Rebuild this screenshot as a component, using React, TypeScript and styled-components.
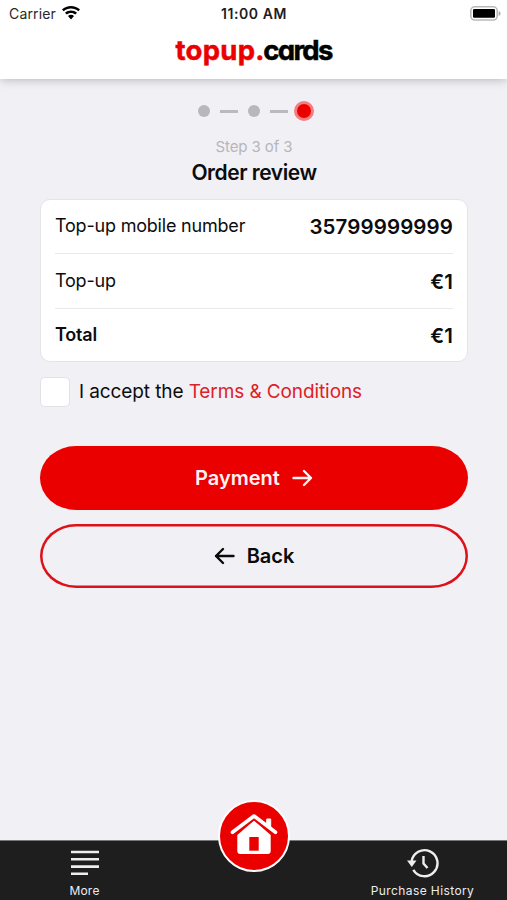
import React from "react";
import styled, { createGlobalStyle } from "styled-components";

const red = "#eb0000";

const GlobalStyle = createGlobalStyle`
  * { box-sizing: border-box; }
  body { margin: 0; background: #f1f0f5; }
  button { font: inherit; }
`;

const Screen = styled.div`
  width: 507px;
  height: 900px;
  display: flex;
  flex-direction: column;
  overflow: hidden;
  background: #f1f0f5;
  color: #0c0c0e;
  font-family: Inter, "Liberation Sans", sans-serif;
`;

const Header = styled.header`
  height: 79px;
  background: #fff;
  box-shadow: 0 1px 9px rgba(0, 0, 0, 0.24);
`;

const StatusBar = styled.div`
  height: 28px;
  padding: 0 6px 0 9px;
  display: grid;
  grid-template-columns: 1fr auto 1fr;
  align-items: center;
  font-size: 14px;
  line-height: 28px;
`;

const Carrier = styled.div`
  display: flex;
  align-items: center;
  gap: 6px;
  letter-spacing: 0.15px;
  color: #28282a;

  svg {
    margin-bottom: 2px;
  }
`;

const Clock = styled.div`
  font-weight: 600;
  font-size: 14px;
  letter-spacing: 0.55px;
  margin-right: 2px;
  color: #1c1c1e;
`;

const BatterySlot = styled.div`
  display: flex;
  justify-content: flex-end;
  padding-bottom: 2px;
`;

const Brand = styled.div`
  display: flex;
  justify-content: center;
  font-size: 27.5px;
  line-height: 44px;
  font-weight: 700;
  letter-spacing: -1.7px;
  color: #000;
  font-feature-settings: "cv11" 1;
  -webkit-text-stroke: 0.5px currentColor;
`;

const BrandRed = styled.span`
  color: ${red};
  letter-spacing: 0.3px;
`;

const BrandDot = styled.span`
  color: ${red};
  letter-spacing: -1.2px;
`;

const Main = styled.main`
  flex: 1;
  padding: 22px 39px 0 40px;
  display: flex;
  flex-direction: column;
`;

const Steps = styled.div`
  height: 20px;
  padding-left: 3px;
  display: flex;
  justify-content: center;
  align-items: center;
`;

const Dot = styled.span<{ $active?: boolean }>`
  width: ${(p) => (p.$active ? 20 : 12)}px;
  height: ${(p) => (p.$active ? 20 : 12)}px;
  border-radius: 50%;
  background: ${(p) => (p.$active ? red : "#b8b8ba")};
  border: ${(p) => (p.$active ? "3px solid #f47d80" : "0")};
`;

const Dash = styled.span<{ $end: number }>`
  width: 18px;
  height: 3px;
  background: #bababc;
  margin: 0 ${(p) => p.$end}px 0 10px;
`;

const StepLabel = styled.div`
  margin-top: 16px;
  text-align: center;
  font-size: 15px;
  line-height: 20px;
  letter-spacing: -0.1px;
  color: #b6b6ba;
`;

const Title = styled.h1`
  margin: 3px 0 0;
  text-align: center;
  font-size: 21px;
  line-height: 26px;
  font-weight: 600;
  letter-spacing: -0.45px;
`;

const Card = styled.section`
  height: 163px;
  margin-top: 13px;
  padding: 0 14px;
  background: #fff;
  border: 1px solid #e4e4e8;
  border-radius: 10px;
`;

const Row = styled.div<{ $height: number; $strong?: boolean }>`
  height: ${(p) => p.$height}px;
  padding-bottom: 1px;
  display: flex;
  justify-content: space-between;
  align-items: center;
  border-bottom: ${(p) => (p.$strong ? "0" : "1.5px solid #e9e9eb")};
  font-size: 18px;
  font-weight: ${(p) => (p.$strong ? 600 : 400)};
  letter-spacing: -0.2px;
`;

const Value = styled.span`
  padding-top: 2px;
  font-size: 20.5px;
  font-weight: 600;
  letter-spacing: 0.1px;
`;

const Terms = styled.label`
  margin-top: 14px;
  display: flex;
  align-items: center;
  gap: 9px;
  height: 31px;
  font-size: 19px;
  letter-spacing: -0.1px;
  white-space: pre;
`;

const Checkbox = styled.span`
  width: 30px;
  height: 30px;
  background: #fff;
  border: 1px solid #e2e2e6;
  border-radius: 5px;
`;

const TermsLink = styled.span`
  color: #df2027;
`;

const Button = styled.button<{ $outline?: boolean }>`
  flex: none;
  height: 64px;
  margin-top: ${(p) => (p.$outline ? 14 : 39)}px;
  padding: 0;
  display: flex;
  align-items: center;
  justify-content: center;
  gap: 12px;
  border: 0;
  box-shadow: ${(p) => (p.$outline ? "inset 0 0 0 2.5px #dc1218" : "none")};
  border-radius: 36px / 32px;
  background: ${(p) => (p.$outline ? "transparent" : red)};
  color: ${(p) => (p.$outline ? "#0a0a0a" : "#fff2f2")};
  font-size: 20px;
  font-weight: 600;
`;

const TabBar = styled.nav`
  height: 60px;
  display: grid;
  grid-template-columns: 1fr 1fr 1fr;
  background: #1e1e1f;
  border-top: 1px solid #767679;
  color: #ececec;
`;

const Tab = styled.div<{ $spacing?: number }>`
  display: flex;
  flex-direction: column;
  align-items: center;
  padding-top: 7px;
  font-size: 12px;
  line-height: 16px;
  letter-spacing: ${(p) => p.$spacing ?? 0.2}px;
  white-space: nowrap;
`;

const TabIcon = styled.svg`
  display: block;
  margin-bottom: 5px;
`;

const HomeButton = styled.div`
  justify-self: center;
  width: 72px;
  height: 72px;
  margin-top: -41px;
  display: flex;
  justify-content: center;
  align-items: center;
  border-radius: 50%;
  border: 2px solid #fff;
  background: ${red};
`;

const Arrow = ({ back }: { back?: boolean }) => (
  <svg width="21" height="18" viewBox="0 0 21 18" fill="none" stroke="currentColor" strokeWidth="2.4" strokeLinecap="round" strokeLinejoin="round">
    {back ? <path d="M19.5 9H2M9 2 2 9l7 7" /> : <path d="M1.5 9H19M12 2l7 7-7 7" />}
  </svg>
);

const WifiIcon = () => (
  <svg width="18" height="14" viewBox="0 0 18 14">
    <path d="M9 0C5.500 0 2.400 1.300 0 3.500l1.700 1.800C3.700 3.500 6.200 2.500 9 2.500s5.300 1 7.300 2.800L18 3.500C15.600 1.300 12.500 0 9 0Z" />
    <path d="M9 4.500c-2.300 0-4.400.9-6 2.300l1.700 1.800C5.900 7.600 7.300 6.900 9 6.900s3.100.7 4.300 1.700L15 6.800C13.400 5.400 11.300 4.500 9 4.500Z" />
    <path d="M9 8.800c-1.200 0-2.200.4-3 1.100l3 3.600 3-3.600c-.8-.7-1.800-1.100-3-1.100Z" />
  </svg>
);

const BatteryIcon = () => (
  <svg width="31" height="15" viewBox="0 0 31 15">
    <rect x=".8" y=".8" width="26.400" height="13.200" rx="4" fill="#fff" stroke="#b9b9b9" strokeWidth="1.600" />
    <rect x="3" y="3" width="22" height="8.800" rx="1.300" />
    <path d="M28.600 5v5c1.200-.4 2-1.300 2-2.500s-.8-2.100-2-2.500Z" fill="#aaa" />
  </svg>
);

export default function App() {
  return (
    <>
      <GlobalStyle />
      <Screen>
        <Header>
          <StatusBar>
            <Carrier>Carrier <WifiIcon /></Carrier>
            <Clock>11:00 AM</Clock>
            <BatterySlot><BatteryIcon /></BatterySlot>
          </StatusBar>
          <Brand><BrandRed>topup</BrandRed><BrandDot>.</BrandDot>cards</Brand>
        </Header>
        <Main>
          <Steps>
            <Dot /><Dash $end={10} /><Dot /><Dash $end={6} /><Dot $active />
          </Steps>
          <StepLabel>Step 3 of 3</StepLabel>
          <Title>Order review</Title>
          <Card>
            <Row $height={53.5}><span>Top-up mobile number</span><Value>35799999999</Value></Row>
            <Row $height={55}><span>Top-up</span><Value>€1</Value></Row>
            <Row $height={52.5} $strong><span>Total</span><Value>€1</Value></Row>
          </Card>
          <Terms>
            <Checkbox />
            <span>I accept the <TermsLink>Terms &amp; Conditions</TermsLink></span>
          </Terms>
          <Button>Payment <Arrow /></Button>
          <Button $outline><Arrow back /> Back</Button>
        </Main>
        <TabBar>
          <Tab>
            <TabIcon width="30" height="30" viewBox="0 0 30 30" stroke="#eee" strokeWidth="2.600">
              <path d="M1 4h28M1 11.300h28M1 18.600h28M1 25.800h17" />
            </TabIcon>
            More
          </Tab>
          <HomeButton>
            <svg width="48" height="44" viewBox="0 0 48 44">
              <path d="M24 6.500 7.300 21v16q0 3 3 3h27.400q3 0 3-3V21Z" fill="#fff" />
              <path d="M2.500 18.800 24 2l21.500 16.800" fill="none" stroke={red} strokeWidth="7" />
              <path d="M36.700 12V5h4v11" fill="#fff" stroke="#fff" strokeLinejoin="round" />
              <path d="M2.500 18.300 24 2l21.500 16.300" fill="none" stroke="#fff" strokeWidth="3.600" strokeLinecap="round" strokeLinejoin="round" />
              <path d="M19.300 23h9.400v13.700h-9.400z" fill={red} />
            </svg>
          </HomeButton>
          <Tab $spacing={0.4}>
            <TabIcon width="34" height="30" viewBox="0 0 34 30" fill="none" stroke="#eee" strokeWidth="2.400">
              <path d="M5.600 13.500A13 13 0 1 1 7.300 21.800" />
              <path d="M17.500 8v7.500l4 4.500" />
              <path d="M1 12.500h9.500L5.800 19Z" fill="#eee" stroke="none" />
            </TabIcon>
            Purchase History
          </Tab>
        </TabBar>
      </Screen>
    </>
  );
}
